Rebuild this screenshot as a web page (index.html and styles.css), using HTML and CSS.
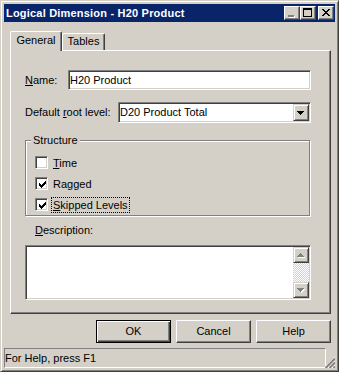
FILE: index.html
```html
<!DOCTYPE html>
<html lang="en">
<head>
    <meta charset="UTF-8">
    <title>Logical Dimension - H20 Product</title>
    <link rel="stylesheet" href="styles.css">
</head>
<body>

    <div class="window">
        <!-- Title bar -->
        <div class="titlebar">
            <span class="title">Logical Dimension - H20 Product</span>
            <div class="caption-btns">
                <span class="cap-btn">
                    <svg width="14" height="12" viewBox="0 0 14 12" shape-rendering="crispEdges">
                        <rect x="4" y="9" width="6" height="2" fill="#fff"/>
                        <rect x="3" y="8" width="6" height="2" fill="#808080"/>
                    </svg>
                </span>
                <span class="cap-btn">
                    <svg width="14" height="12" viewBox="0 0 14 12" shape-rendering="crispEdges">
                        <path d="M2 1h9v2H2z M2 3h1v6H2z M10 3h1v6h-1z M2 9h9v1H2z" fill="#000"/>
                    </svg>
                </span>
                <span class="cap-btn cap-close">
                    <svg width="14" height="12" viewBox="0 0 14 12" shape-rendering="crispEdges">
                        <path d="M3 2h2v1H3z M9 2h2v1H9z M4 3h2v1H4z M8 3h2v1H8z M5 4h4v1H5z M6 5h2v1H6z M5 6h4v1H5z M4 7h2v1H4z M8 7h2v1H8z M3 8h2v1H3z M9 8h2v1H9z" fill="#000"/>
                    </svg>
                </span>
            </div>
        </div>

        <div class="client">
            <div class="dialog-body">
                <!-- Tabs -->
                <div class="tabs">
                    <div class="tab tab-active">General</div>
                    <div class="tab">Tables</div>
                </div>

                <div class="panel">
                    <div class="field-row">
                        <label class="lbl lbl-name"><u>N</u>ame:</label>
                        <div class="edit">H20 Product</div>
                    </div>
                    <div class="field-row row-combo">
                        <label class="lbl lbl-root">Default <u>r</u>oot level:</label>
                        <div class="combo">
                            <span class="combo-text">D20 Product Total</span>
                            <span class="combo-btn">
                                <svg width="7" height="4" viewBox="0 0 7 4" shape-rendering="crispEdges">
                                    <path d="M0 0h7v1H0z M1 1h5v1H1z M2 2h3v1H2z M3 3h1v1H3z" fill="#000"/>
                                </svg>
                            </span>
                        </div>
                    </div>

                    <!-- Structure group -->
                    <div class="group">
                        <div class="group-title">Structure</div>
                        <div class="check-row">
                            <span class="checkbox"></span>
                            <span class="check-label"><u>T</u>ime</span>
                        </div>
                        <div class="check-row">
                            <span class="checkbox">
                                <svg width="7" height="7" viewBox="0 0 7 7" shape-rendering="crispEdges">
                                    <path d="M6 0h1v1H6z M5 1h2v1H5z M0 2h1v1H0z M4 2h3v1H4z M0 3h2v1H0z M3 3h3v1H3z M0 4h5v1H0z M1 5h3v1H1z M2 6h1v1H2z" fill="#000"/>
                                </svg>
                            </span>
                            <span class="check-label">Ragged</span>
                        </div>
                        <div class="check-row">
                            <span class="checkbox">
                                <svg width="7" height="7" viewBox="0 0 7 7" shape-rendering="crispEdges">
                                    <path d="M6 0h1v1H6z M5 1h2v1H5z M0 2h1v1H0z M4 2h3v1H4z M0 3h2v1H0z M3 3h3v1H3z M0 4h5v1H0z M1 5h3v1H1z M2 6h1v1H2z" fill="#000"/>
                                </svg>
                            </span>
                            <span class="check-label focused"><u>S</u>kipped Levels</span>
                        </div>
                    </div>

                    <div class="desc-label"><u>D</u>escription:</div>
                    <div class="memo">
                        <div class="scrollbar">
                            <span class="scroll-btn">
                                <svg width="8" height="5" viewBox="0 0 8 5" shape-rendering="crispEdges">
                                    <path d="M4 1h1v1H4z M3 2h3v1H3z M2 3h5v1H2z M1 4h7v1H1z" fill="#fff"/>
                                    <path d="M3 0h1v1H3z M2 1h3v1H2z M1 2h5v1H1z M0 3h7v1H0z" fill="#808080"/>
                                </svg>
                            </span>
                            <span class="scroll-track"></span>
                            <span class="scroll-btn">
                                <svg width="8" height="5" viewBox="0 0 8 5" shape-rendering="crispEdges">
                                    <path d="M1 1h7v1H1z M2 2h5v1H2z M3 3h3v1H3z M4 4h1v1H4z" fill="#fff"/>
                                    <path d="M0 0h7v1H0z M1 1h5v1H1z M2 2h3v1H2z M3 3h1v1H3z" fill="#808080"/>
                                </svg>
                            </span>
                        </div>
                    </div>
                </div>

                <!-- Dialog buttons -->
                <div class="buttons">
                    <div class="btn btn-default">OK</div>
                    <div class="btn">Cancel</div>
                    <div class="btn">Help</div>
                </div>
            </div>

            <!-- Status bar -->
            <div class="statusbar">
                <div class="status-pane">For Help, press F1</div>
                <svg class="grip" width="11" height="11" viewBox="0 0 11 11">
                    <path d="M0 11L11 0 M4 11L11 4 M8 11L11 8" stroke="#fff" stroke-width="1"/>
                    <path d="M1.5 11L11 1.5 M5.5 11L11 5.5 M9.5 11L11 9.5" stroke="#808080" stroke-width="1.8"/>
                </svg>
            </div>
        </div>
    </div>

</body>
</html>
```

FILE: styles.css
```css
* {
    margin: 0;
    padding: 0;
    box-sizing: border-box;
}

body {
    font-family: "Liberation Sans", Arial, sans-serif;
    font-size: 11px;
    line-height: 13px;
    color: #000;
    background: #d4d0c8;
}

u {
    text-decoration: underline;
}

/* Window frame */
.window {
    width: 339px;
    height: 372px;
    background: #d4d0c8;
    border: 1px solid;
    border-color: #d4d0c8 #404040 #404040 #d4d0c8;
    box-shadow: inset 1px 1px #fff, inset -1px -1px #808080;
    padding: 3px;
    display: flex;
    flex-direction: column;
}

.titlebar {
    height: 18px;
    background: #0a246a;
    display: flex;
    align-items: center;
    padding-left: 2px;
}

.title {
    color: #fff;
    font-weight: bold;
    letter-spacing: 0.2px;
    flex: 1;
}

.caption-btns {
    display: flex;
    margin-right: 1px;
}

.cap-btn {
    width: 16px;
    height: 14px;
    background: #d4d0c8;
    border: 1px solid;
    border-color: #fff #404040 #404040 #fff;
    box-shadow: inset -1px -1px #808080;
    display: block;
}

.cap-btn svg {
    display: block;
}

.cap-close {
    margin-left: 2px;
}

/* Client area */
.client {
    flex: 1;
    display: flex;
    flex-direction: column;
}

.dialog-body {
    padding: 9px 4px 0 6px;
}

/* Tabs */
.tabs {
    height: 19px;
    display: flex;
    align-items: flex-end;
}

.tab {
    width: 43px;
    height: 17px;
    border: 1px solid;
    border-bottom: none;
    border-color: #fff #404040 #404040 #fff;
    box-shadow: inset -1px 0 #808080;
    border-radius: 2px 2px 0 0;
    display: flex;
    align-items: center;
    justify-content: center;
    padding-bottom: 1px;
}

.tab-active {
    width: 52px;
    height: 20px;
    margin-bottom: -1px;
    background: #d4d0c8;
    position: relative;
    z-index: 1;
    padding-bottom: 2px;
}

/* Tab page */
.panel {
    height: 264px;
    border: 1px solid;
    border-color: #fff #404040 #404040 #fff;
    box-shadow: inset -1px -1px #808080;
    padding: 19px 19px 0 14px;
    display: flex;
    flex-direction: column;
}

.field-row {
    display: flex;
    align-items: center;
}

.row-combo {
    margin-top: 12px;
}

.lbl-name {
    width: 43px;
}

.lbl-root {
    width: 93px;
}

.edit,
.combo,
.memo,
.checkbox {
    background: #fff;
    border: 1px solid;
    border-color: #808080 #fff #fff #808080;
    box-shadow: inset 1px 1px #404040, inset -1px -1px #d4d0c8;
}

.edit {
    flex: 1;
    height: 20px;
    padding-left: 1px;
    line-height: 18px;
}

.combo {
    flex: 1;
    height: 21px;
    display: flex;
    align-items: center;
    padding-left: 1px;
}

.combo-text {
    flex: 1;
}

.combo-btn,
.scroll-btn {
    width: 16px;
    height: 17px;
    background: #d4d0c8;
    border: 1px solid;
    border-color: #d4d0c8 #404040 #404040 #d4d0c8;
    box-shadow: inset 1px 1px #fff, inset -1px -1px #808080;
    display: flex;
    align-items: center;
    justify-content: center;
}

.combo-btn {
    margin-right: 1px;
}

.combo-btn svg {
    margin-left: -1px;
}

/* Group box */
.group {
    margin-top: 17px;
    margin-right: 1px;
    border: 1px solid #808080;
    box-shadow: 1px 1px 0 #fff, inset 1px 1px 0 #fff;
    padding: 0 0 4px 9px;
    display: flex;
    flex-direction: column;
}

.group-title {
    align-self: flex-start;
    margin: -7px 0 0 -4px;
    padding: 0 2px;
    background: #d4d0c8;
}

.check-row {
    height: 13px;
    display: flex;
    align-items: center;
    margin-top: 8px;
}

.group-title + .check-row {
    margin-top: 9px;
}

.checkbox {
    width: 13px;
    height: 13px;
    padding: 3px 0 0 3px;
}

.checkbox svg {
    display: block;
}

.check-label {
    margin: -1px 0 -2px 3px;
    padding: 0 1px;
    line-height: 14px;
    border: 1px dotted transparent;
}

.check-label.focused {
    border-color: #000;
}

.desc-label {
    margin-top: 8px;
    padding-left: 10px;
}

.memo {
    margin-top: 8px;
    height: 55px;
    display: flex;
    justify-content: flex-end;
}

.scrollbar {
    width: 16px;
    margin: 1px;
    display: flex;
    flex-direction: column;
}

.scroll-btn {
    height: 16px;
}

.scroll-track {
    flex: 1;
    background: conic-gradient(#d4d0c8 25%, #fff 0 50%, #d4d0c8 0 75%, #fff 0);
    background-size: 2px 2px;
}

/* Buttons */
.buttons {
    margin-top: 6px;
    display: flex;
    justify-content: flex-end;
    gap: 5px;
}

.btn {
    width: 75px;
    height: 23px;
    border: 1px solid;
    border-color: #fff #404040 #404040 #fff;
    box-shadow: inset -1px -1px #808080;
    display: flex;
    align-items: center;
    justify-content: center;
}

.btn-default {
    border-color: #000;
    box-shadow: inset 1px 1px #fff, inset -1px -1px #404040, inset -2px -2px #808080;
}

/* Status bar */
.statusbar {
    margin-top: 5px;
    height: 20px;
    display: flex;
}

.status-pane {
    flex: 1;
    border: 1px solid;
    border-color: #808080 #fff #fff #808080;
    line-height: 18px;
}

.grip {
    align-self: flex-end;
    margin-left: -2px;
}
```
